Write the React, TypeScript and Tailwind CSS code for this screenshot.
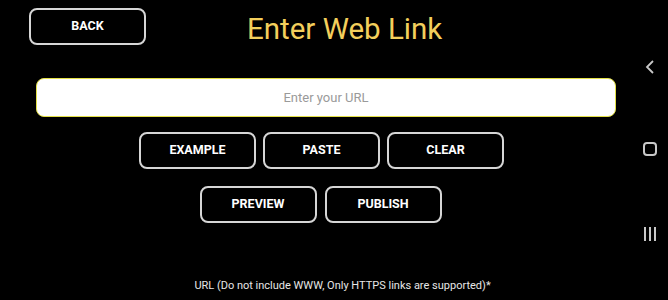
import React from 'react';

const font = { fontFamily: 'Roboto, "Noto Sans", sans-serif' };

const OutlineButton: React.FC<{ label: string }> = ({ label }) => (
  <button className="w-[117px] h-[37px] rounded-lg border-2 border-[#d6d6d6] bg-black text-[12.5px] font-bold text-white">
    {label}
  </button>
);

export default function App() {
  return (
    <div className="flex w-[668px] h-[300px] bg-black overflow-hidden" style={font}>
      {/* Main content */}
      <div className="flex flex-col w-[645px]">
        <div className="flex items-center h-[54px]">
          <div className="ml-[29px] mb-[1px]">
            <button className="w-[117px] h-[37px] rounded-lg border-2 border-[#d6d6d6] bg-black text-[12.5px] font-bold text-white">
              BACK
            </button>
          </div>
          <h1 className="ml-[101px] mt-[5px] text-[29.5px] leading-none text-[#f3cf5c]">Enter Web Link</h1>
        </div>

        <div className="ml-[36px] mt-[24px] w-[580px] h-[39px] rounded-lg border-[1.5px] border-[#e3e047] bg-white flex items-center justify-center">
          <span className="text-[13px] text-[#9a9a9a]">Enter your URL</span>
        </div>

        <div className="flex justify-center gap-[7px] mt-[15px] w-[643px]">
          <OutlineButton label="EXAMPLE" />
          <OutlineButton label="PASTE" />
          <OutlineButton label="CLEAR" />
        </div>

        <div className="flex justify-center gap-[8px] mt-[17px] w-[641px]">
          <OutlineButton label="PREVIEW" />
          <OutlineButton label="PUBLISH" />
        </div>

        <p className="mt-[55px] ml-[42px] text-center text-[11px] text-[#e6e6e6]">
          URL (Do not include WWW, Only HTTPS links are supported)*
        </p>
      </div>

      {/* Android nav bar */}
      <div className="flex-1 flex flex-col items-center pr-[17px] pt-[59px] text-[#c8c8c8]">
        <svg width="10" height="16" viewBox="0 0 10 16" fill="none" stroke="currentColor" strokeWidth="1.8">
          <path d="M8 2 L2 8 L8 14" />
        </svg>
        <div className="mt-[67px] w-[14px] h-[14px] rounded-[4px] border-2 border-[#c8c8c8]" />
        <div className="mt-[71px] flex gap-[3px]">
          <div className="w-[2px] h-[14px] bg-[#c8c8c8]" />
          <div className="w-[2px] h-[14px] bg-[#c8c8c8]" />
          <div className="w-[2px] h-[14px] bg-[#c8c8c8]" />
        </div>
      </div>
    </div>
  );
}
